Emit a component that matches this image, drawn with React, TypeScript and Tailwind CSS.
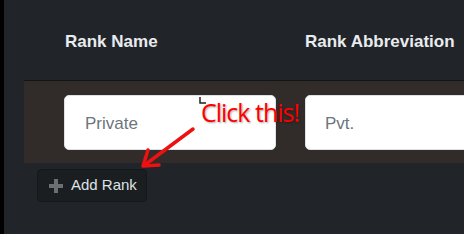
import React from "react";

export default function App() {
  return (
    <div className="relative flex h-[234px] w-[464px] overflow-hidden bg-[#212529]" style={{ fontFamily: '"Liberation Sans", Arial, sans-serif' }}>
      <div className="w-[4px] shrink-0 bg-black" />
      <div className="flex flex-1 flex-col pl-[20px]">
        <div className="flex h-[81px] items-center border-b border-[#121416] pb-[5px] pl-[41px] pt-[9px] text-[17px] font-bold text-[#e9ecef]">
          <div className="w-[240px]">Rank Name</div>
          <div className="whitespace-nowrap">Rank Abbreviation</div>
        </div>
        <div className="flex gap-[29px] bg-[#312c29] pb-[13px] pl-[40px] pt-[14px]">
          <div className="flex h-[55px] w-[212px] shrink-0 items-center rounded-[5px] border border-[#dee2e6] bg-white pl-[20px] pt-[2px] text-[17px] text-[#6c757d]">Private</div>
          <div className="flex h-[55px] w-[212px] shrink-0 items-center rounded-[5px] border border-[#dee2e6] bg-white pl-[19px] pt-[2px] text-[17px] text-[#6c757d]">Pvt.</div>
        </div>
        <div className="pl-[13px] pt-[6px]">
          <button className="flex h-[33px] w-[110px] items-center gap-[7px] rounded-[4px] border border-[#15181a] bg-[#1b1e21] pl-[10px] text-[15px] text-[#dee2e6]">
            <svg width="16" height="16" viewBox="0 0 16 16">
              <path d="M6 1h4v5h5v4h-5v5H6v-5H1V6h5z" fill="#6c6f72" />
            </svg>
            Add Rank
          </button>
        </div>
      </div>
      <div className="absolute left-[199px] top-[97px]">
        <svg width="8" height="7" viewBox="0 0 8 7">
          <path d="M1 0v6h6" stroke="#222" strokeWidth="1.5" fill="none" />
        </svg>
      </div>
      <div className="absolute left-[201px] top-[95px] text-[25px] leading-[34px] tracking-[-1px] text-[#ff0000]" style={{ fontFamily: '"Open Sans", sans-serif', textShadow: "1px 1px 2px rgba(0,0,0,0.35)" }}>Click this!</div>
      <svg className="absolute left-0 top-0" width="464" height="234" viewBox="0 0 464 234">
        <g stroke="#ee1111" strokeWidth="3.5" strokeLinecap="round" fill="none">
          <path d="M193 129 L146 164" />
          <path d="M148 150 L143 166 L159 165" strokeLinejoin="round" />
        </g>
      </svg>
    </div>
  );
}
